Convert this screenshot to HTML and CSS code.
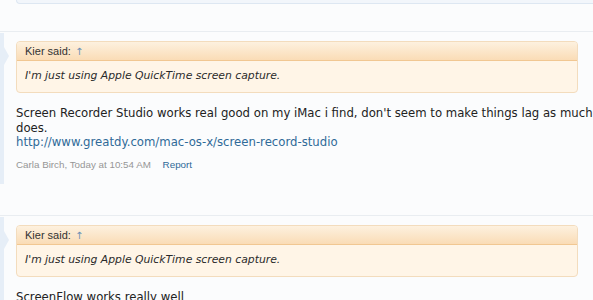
FILE: index.html
```html
<!DOCTYPE html>
<html lang="en">
<head>
  <meta charset="UTF-8" />
  <title>Thread - Screen capture</title>
  <link rel="stylesheet" href="styles.css">
</head>
<body>
  <div class="prev-post"></div>

  <div class="message">
    <div class="user-strip"></div>
    <div class="message-body">
      <div class="quote">
        <div class="quote-head">Kier said: <span class="quote-arrow">↑</span></div>
        <div class="quote-text">I'm just using Apple QuickTime screen capture.</div>
      </div>
      <div class="message-text">
        Screen Recorder Studio works real good on my iMac i find, don't seem to make things lag as much as QuickTime<br>
        does.<br>
        <a href="#">http://www.greatdy.com/mac-os-x/screen-record-studio</a>
      </div>
      <div class="message-meta">
        <span class="author">Carla Birch, Today at 10:54 AM</span>
        <a href="#" class="report">Report</a>
      </div>
    </div>
  </div>

  <div class="message">
    <div class="user-strip"></div>
    <div class="message-body">
      <div class="quote">
        <div class="quote-head">Kier said: <span class="quote-arrow">↑</span></div>
        <div class="quote-text">I'm just using Apple QuickTime screen capture.</div>
      </div>
      <div class="message-text">
        ScreenFlow works really well
      </div>
    </div>
  </div>
</body>
</html>
```

FILE: styles.css
```css
body {
  margin: 0;
  padding: 0;
  background-color: #fbfcfd;
  color: #222;
  font-family: "DejaVu Sans", Verdana, sans-serif;
  overflow: hidden;
}

.prev-post {
  margin-left: 16px;
  height: 3px;
  background-color: #f2f6fb;
  border: 1px solid #dde7f2;
  border-top: none;
  border-right: none;
  border-radius: 0 0 0 4px;
  margin-bottom: 27px;
}

.message {
  position: relative;
  display: flex;
  border-top: 1px solid #e9edf1;
  padding-top: 9px;
  overflow: hidden;
}

.user-strip {
  flex: none;
  width: 4px;
  margin-top: -8px;
  height: 151px;
  background-color: #e6eef7;
  margin-right: 12px;
}

.user-strip::after {
  content: "";
  position: absolute;
  left: 4px;
  top: 15px;
  border: 9px solid transparent;
  border-left: 5px solid #e6eef7;
}

.message-body {
  flex: 1;
  min-width: 0;
  padding-bottom: 43px;
}

.quote {
  width: 560px;
  border: 1px solid #f3dcbd;
  border-radius: 4px;
  background-color: #fff5e7;
  overflow: hidden;
}

.quote-head {
  font-family: "Liberation Sans", Arial, sans-serif;
  font-size: 11px;
  color: #333;
  height: 18px;
  line-height: 18px;
  padding-left: 8px;
  background: linear-gradient(#fdf1df, #fadcb6);
  border-bottom: 1px solid #f1c792;
}

.quote-arrow {
  font-family: "DejaVu Sans", sans-serif;
  font-size: 10px;
  color: #6b8fb5;
  margin-left: 1px;
}

.quote-text {
  font-style: italic;
  font-size: 10.8px;
  color: #2a2a2a;
  padding: 8px 8px 9px;
  line-height: 14px;
}

.message-text {
  margin-top: 13px;
  font-size: 11.7px;
  line-height: 14.5px;
  white-space: nowrap;
}

.message-text a {
  color: #2f6a98;
  text-decoration: none;
}

.message-meta {
  margin-top: 8px;
  font-family: "Liberation Sans", Arial, sans-serif;
  font-size: 9.8px;
  line-height: 14px;
}

.author {
  color: #969696;
}

.report {
  margin-left: 9px;
  color: #2f6a98;
  text-decoration: none;
}
```
